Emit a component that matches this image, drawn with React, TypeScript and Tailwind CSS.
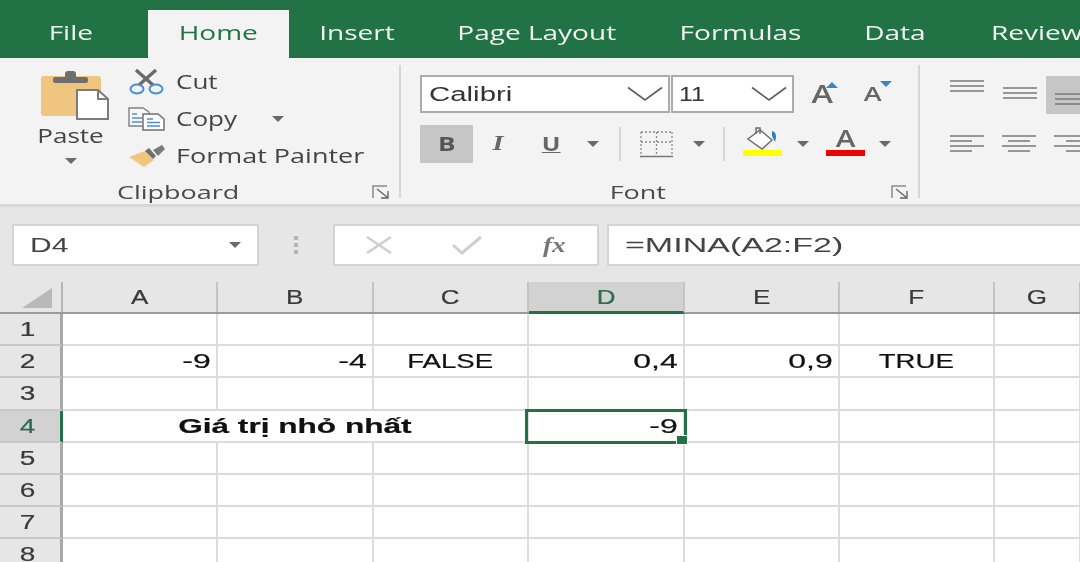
import React from "react";

type O = "l" | "c" | "r";
const originOf: Record<O, string> = { l: "origin-left", c: "origin-center", r: "origin-right" };

// The reference is a horizontally stretched capture, so text glyphs are widened.
function T({ children, o = "c", s = "scale-x-[1.35]", className = "" }: { children: React.ReactNode; o?: O; s?: string; className?: string }) {
  return <span className={`inline-block shrink-0 whitespace-nowrap ${s} ${originOf[o]} ${className}`}>{children}</span>;
}
const UI = "font-['Open_Sans',sans-serif]";
const LIB = "font-['Liberation_Sans',sans-serif]";
const CELL = "font-['Liberation_Sans',sans-serif] [-webkit-text-stroke:0.2px]";

function Caret({ w = 12, color = "#6a6a6a" }: { w?: number; color?: string }) {
  return (
    <svg width={w} height={6} viewBox="0 0 12 6" className="shrink-0">
      <path d="M0 0h12L6 6z" fill={color} />
    </svg>
  );
}
function Chevron() {
  return (
    <svg width={36} height={16} viewBox="0 0 36 16" className="shrink-0">
      <path d="M1 1.5 18 14 35 1.5" fill="none" stroke="#5f5f5f" strokeWidth={1.6} />
    </svg>
  );
}
function PasteIcon() {
  return (
    <svg width={72} height={52} viewBox="0 0 72 52" className="shrink-0 ml-[10px]">
      <rect x={1} y={8} width={60} height={40} rx={3} fill="#efc57f" />
      <rect x={13} y={9} width={35} height={6} rx={2} fill="#6e6e6e" />
      <rect x={25} y={3} width={11} height={8} rx={3} fill="#6e6e6e" />
      <path d="M37 22h21l10 9v20H37z" fill="#fff" stroke="#7c7c7c" strokeWidth={2} />
      <path d="M58 22v9h10" fill="none" stroke="#7c7c7c" strokeWidth={2} />
    </svg>
  );
}
function CutIcon() {
  return (
    <svg width={38} height={26} viewBox="0 0 38 26" className="shrink-0">
      <path d="M8 1 25 16M28 1 11 16" stroke="#6a6a6a" strokeWidth={3.4} fill="none" />
      <ellipse cx={9} cy={20} rx={6.5} ry={4.5} fill="none" stroke="#4a90d0" strokeWidth={2} />
      <ellipse cx={28} cy={20} rx={6.5} ry={4.5} fill="none" stroke="#4a90d0" strokeWidth={2} />
    </svg>
  );
}
function CopyIcon() {
  return (
    <svg width={38} height={24} viewBox="0 0 38 24" className="shrink-0">
      <path d="M1 1h14l6 4v14H1z" fill="#f8f8f8" stroke="#808080" strokeWidth={1.4} />
      <path d="M4 7h5M4 11h10M4 15h10" stroke="#4a90d0" strokeWidth={1.4} />
      <path d="M15 7h15l6 5v11H15z" fill="#fff" stroke="#707070" strokeWidth={1.5} />
      <path d="M19 12h6M19 15.500h13M19 19h13" stroke="#4a90d0" strokeWidth={1.5} />
    </svg>
  );
}
function PainterIcon() {
  return (
    <svg width={38} height={24} viewBox="0 0 38 24" className="shrink-0">
      <path d="M1 13 17 7l9 9-10 7z" fill="#efc57f" />
      <path d="M17 7l4-3 7 8-3 3z" fill="#6e6e6e" />
      <path d="M25 6l9-5 3 4-7 7z" fill="#7a7a7a" />
    </svg>
  );
}
function Launcher() {
  return (
    <svg width={19} height={15} viewBox="0 0 19 15" className="shrink-0">
      <path d="M1 13V1h14" fill="none" stroke="#8a8a8a" strokeWidth={1.5} />
      <path d="M5 4l10 8M16 6v7H9" fill="none" stroke="#666" strokeWidth={1.4} />
    </svg>
  );
}
function BordersIcon() {
  return (
    <svg width={33} height={27} viewBox="0 0 33 27" className="shrink-0">
      <path d="M1 1h31M1 11h31M1 1v22M16.500 1v22M32 1v22" stroke="#8a8a8a" strokeWidth={1.3} strokeDasharray="2 2" fill="none" />
      <path d="M0 25.500h33" stroke="#777" strokeWidth={1.6} />
    </svg>
  );
}
function FillIcon() {
  return (
    <svg width={40} height={30} viewBox="0 0 40 30" className="shrink-0">
      <path d="M5 13 17 4l12 10-10 9z" fill="#fff" stroke="#707070" strokeWidth={1.5} />
      <path d="M13 8V2h4v6" fill="none" stroke="#707070" strokeWidth={1.5} />
      <path d="M29 5c4 1 5 5 3 11l-3-6z" fill="#2f7fc8" />
      <rect x={0} y={24} width={39} height={6} fill="#ffff00" />
    </svg>
  );
}
function TinyTri({ up, className = "" }: { up: boolean; className?: string }) {
  return (
    <svg width={12} height={6} viewBox="0 0 12 6" className={`shrink-0 ${className}`}>
      <path d={up ? "M6 0l6 6H0z" : "M0 0h12L6 6z"} fill="#3d85c6" />
    </svg>
  );
}
function Lines({ kind }: { kind: "full" | "left" | "center" | "right" }) {
  const d: Record<string, string> = {
    full: "M0 1h34M0 6h34M0 11h34",
    left: "M0 1h34M0 6h22M0 11h34M0 16h22",
    center: "M0 1h34M6 6h22M0 11h34M6 16h22",
    right: "M0 1h34M12 6h22M0 11h34M12 16h22",
  };
  return (
    <svg width={34} height={kind === "full" ? 12 : 17} viewBox={`0 0 34 ${kind === "full" ? 12 : 17}`} className="shrink-0">
      <path d={d[kind]} stroke="#7a7a7a" strokeWidth={1.5} fill="none" />
    </svg>
  );
}
function Sep() {
  return <div className="w-[2px] mt-[7px] mb-[6px] bg-[#d6d6d6] shrink-0" />;
}
function GroupFoot({ label, w }: { label: string; w: number }) {
  return (
    <div className="h-[27px] pt-[3px] flex items-center shrink-0">
      <div className="flex justify-center text-[#4a4a4a] text-[19px]" style={{ width: w }}>
        <T s="scale-x-[1.42]">{label}</T>
      </div>
      <div className="ml-[16px] flex">
        <Launcher />
      </div>
    </div>
  );
}

const tabs = [
  { l: "File", w: 148 },
  { l: "Home", w: 141, active: true },
  { l: "Insert", w: 136 },
  { l: "Page Layout", w: 224 },
  { l: "Formulas", w: 184 },
  { l: "Data", w: 123 },
  { l: "Review", w: 162 },
];

const colW = ["w-[155px]", "w-[156px]", "w-[155px]", "w-[156px]", "w-[155px]", "w-[155px]", "w-[86px]"];
const letters = ["A", "B", "C", "D", "E", "F", "G"];
const NUM = "scale-x-[1.6]";

function RowCells({ r }: { r: number }) {
  const row2: Record<number, { t: string; o: O; s: string }> = {
    0: { t: "-9", o: "r", s: NUM },
    1: { t: "-4", o: "r", s: NUM },
    2: { t: "FALSE", o: "c", s: "scale-x-[1.38]" },
    3: { t: "0,4", o: "r", s: NUM },
    4: { t: "0,9", o: "r", s: NUM },
    5: { t: "TRUE", o: "c", s: "scale-x-[1.38]" },
  };
  const base = "shrink-0 h-full border-r-2 border-b-2 border-[#dcdcdc] flex items-center bg-white";
  if (r === 4) {
    return (
      <>
        <div className={`${base} w-[466px] justify-center font-bold`}>
          <T s="scale-x-[1.58]">Giá trị nhỏ nhất</T>
        </div>
        <div className={`${base} ${colW[3]} justify-end pr-[5px] relative`}>
          <T o="r" s={NUM}>-9</T>
          <div className="absolute left-[-4px] top-[-2px] w-[162px] h-[35px] border-[3px] border-[#217346]" />
          <div className="absolute right-[-5px] bottom-[-4px] w-[12px] h-[10px] bg-[#217346] border border-white" />
        </div>
        {[4, 5, 6].map((i) => (
          <div key={i} className={`${base} ${colW[i]}`} />
        ))}
      </>
    );
  }
  return (
    <>
      {colW.map((w, i) => {
        const c = r === 2 ? row2[i] : undefined;
        const just = c?.o === "r" ? "justify-end pr-[5px]" : "justify-center";
        return (
          <div key={i} className={`${base} ${w} ${just}`}>
            {c && <T o={c.o} s={c.s}>{c.t}</T>}
          </div>
        );
      })}
    </>
  );
}

export default function App() {
  return (
    <div className={`w-[1080px] h-[562px] overflow-hidden bg-white blur-[0.7px] ${UI}`}>
      {/* Tabs */}
      <div className="h-[58px] bg-[#217346] flex items-end overflow-hidden">
        {tabs.map((t) => (
          <div
            key={t.l}
            className={`shrink-0 h-[48px] flex items-center justify-center text-[20px] pb-[3px] ${
              t.active ? "bg-[#f3f3f3] text-[#217346]" : "text-[#f2f2f2]"
            }`}
            style={{ width: t.w }}
          >
            <T s="scale-x-[1.4]" className={t.l === "File" ? "mr-[6px]" : ""}>{t.l}</T>
          </div>
        ))}
      </div>

      {/* Ribbon */}
      <div className="h-[149px] bg-[#f3f3f3] border-b-[3px] border-[#d8d8d8] flex text-[#444] overflow-hidden">
        {/* Clipboard */}
        <div className="w-[399px] shrink-0 flex flex-col">
          <div className="flex-1 flex min-h-0">
            <div className="ml-[30px] w-[82px] flex flex-col items-center pt-[10px] shrink-0">
              <PasteIcon />
              <div className="mt-[1px] text-[20px] leading-[30px]">
                <T s="scale-x-[1.3]">Paste</T>
              </div>
              <div className="mt-[7px]">
                <Caret />
              </div>
            </div>
            <div className="ml-[16px] pt-[5px] flex flex-col text-[20px]">
              <div className="h-[37px] flex items-center">
                <div className="w-[48px] flex">
                  <CutIcon />
                </div>
                <T o="l" s="scale-x-[1.3]">Cut</T>
              </div>
              <div className="h-[37px] flex items-center">
                <div className="w-[48px] flex">
                  <CopyIcon />
                </div>
                <T o="l" s="scale-x-[1.3]">Copy</T>
                <div className="ml-[49px]">
                  <Caret />
                </div>
              </div>
              <div className="h-[37px] flex items-center">
                <div className="w-[48px] flex">
                  <PainterIcon />
                </div>
                <T o="l">Format Painter</T>
              </div>
            </div>
          </div>
          <GroupFoot label="Clipboard" w={356} />
        </div>
        <Sep />

        {/* Font */}
        <div className="w-[517px] shrink-0 flex flex-col">
          <div className="flex-1 min-h-0 pl-[19px] pt-[17px]">
            <div className="h-[38px] flex items-center">
              <div className={`w-[250px] h-[38px] bg-white border-2 border-[#ababab] flex items-center justify-between pl-[7px] pr-[5px] text-[#333] text-[20px] ${LIB}`}>
                <T o="l" s="scale-x-[1.47]">Calibri</T>
                <Chevron />
              </div>
              <div className={`ml-[1px] w-[123px] h-[38px] bg-white border-2 border-[#ababab] flex items-center justify-between pl-[6px] pr-[5px] text-[#333] text-[20px] ${LIB}`}>
                <T o="l" s="scale-x-[1.25]">11</T>
                <Chevron />
              </div>
              <div className="ml-[12px] w-[32px] flex items-start justify-center relative text-[#666] font-semibold text-[25px]">
                <T s="scale-x-[1.3]">A</T>
                <TinyTri up className="absolute right-[0px] top-[7px]" />
              </div>
              <div className="ml-[19px] w-[32px] flex items-start justify-center relative text-[#666] font-semibold text-[20px]">
                <T s="scale-x-[1.35]">A</T>
                <TinyTri up={false} className="absolute right-[-3px] top-[2px]" />
              </div>
            </div>
            <div className="h-[38px] mt-[12px] flex items-center">
              <div className="w-[53px] h-[38px] bg-[#c6c6c6] flex items-center justify-center font-bold text-[20px] text-[#555]">
                <T s="scale-x-[1.3]">B</T>
              </div>
              <div className="w-[50px] flex justify-center font-['Liberation_Serif',serif] italic font-bold text-[21px] text-[#666]">
                <T>I</T>
              </div>
              <div className="w-[56px] flex justify-center font-bold underline text-[19px] text-[#666]">
                <T s="scale-x-[1.3]">U</T>
              </div>
              <div className="ml-[4px] w-[20px] flex justify-center">
                <Caret />
              </div>
              <div className="ml-[16px] w-[2px] h-[34px] bg-[#d6d6d6]" />
              <div className="ml-[19px] flex">
                <BordersIcon />
              </div>
              <div className="ml-[20px] flex">
                <Caret />
              </div>
              <div className="ml-[18px] w-[2px] h-[34px] bg-[#d6d6d6]" />
              <div className="ml-[18px] flex mb-[7px]">
                <FillIcon />
              </div>
              <div className="ml-[14px] flex">
                <Caret />
              </div>
              <div className="ml-[17px] w-[39px] flex flex-col items-center mb-[6px]">
                <div className="text-[#666] font-semibold text-[23px] leading-[24px]">
                  <T s="scale-x-[1.3]">A</T>
                </div>
                <div className="w-[39px] h-[6px] bg-[#f00000]" />
              </div>
              <div className="ml-[14px] flex">
                <Caret />
              </div>
            </div>
          </div>
          <GroupFoot label="Font" w={474} />
        </div>
        <Sep />

        {/* Alignment */}
        <div className="pl-[21px] flex-1 min-w-0 overflow-hidden">
          <div className="flex w-[200px] mt-[18px] h-[38px]">
            <div className="w-[52px] shrink-0 flex justify-center pt-[4px]">
              <Lines kind="full" />
            </div>
            <div className="w-[53px] shrink-0 flex justify-center pt-[11px]">
              <Lines kind="full" />
            </div>
            <div className="w-[52px] shrink-0 flex justify-center pt-[17px] bg-[#c6c6c6]">
              <Lines kind="full" />
            </div>
          </div>
          <div className="flex w-[200px] mt-[21px]">
            <div className="w-[52px] shrink-0 flex justify-center">
              <Lines kind="left" />
            </div>
            <div className="w-[52px] shrink-0 flex justify-center">
              <Lines kind="center" />
            </div>
            <div className="w-[52px] shrink-0 flex justify-center">
              <Lines kind="right" />
            </div>
          </div>
        </div>
      </div>

      {/* Formula bar */}
      <div className="h-[75px] bg-[#e6e6e6] pt-[17px] flex items-start overflow-hidden">
        <div className={`ml-[12px] w-[247px] h-[42px] shrink-0 bg-white border-2 border-[#d4d4d4] flex items-center justify-between pl-[16px] pr-[14px] text-[#444] text-[20px] ${LIB}`}>
          <T o="l" s="scale-x-[1.5]">D4</T>
          <Caret w={16} />
        </div>
        <div className="w-[74px] h-[42px] shrink-0 flex flex-col items-center justify-center gap-[3px]">
          <div className="w-[4px] h-[4px] bg-[#b4b4b4]" />
          <div className="w-[4px] h-[4px] bg-[#b4b4b4]" />
          <div className="w-[4px] h-[4px] bg-[#b4b4b4]" />
        </div>
        <div className="w-[266px] h-[42px] shrink-0 bg-white border-2 border-[#d4d4d4] flex items-center">
          <div className="w-[87px] flex justify-center">
            <svg width={28} height={18} viewBox="0 0 28 18">
              <path d="M2 1l24 16M26 1 2 17" stroke="#cfcfcf" strokeWidth={2.6} fill="none" />
            </svg>
          </div>
          <div className="w-[90px] flex justify-center">
            <svg width={32} height={20} viewBox="0 0 32 20">
              <path d="M2 10l9 8L30 2" stroke="#cfcfcf" strokeWidth={3} fill="none" />
            </svg>
          </div>
          <div className="w-[85px] flex justify-center font-['Liberation_Serif',serif] italic font-bold text-[20px] text-[#777]">
            <T>fx</T>
          </div>
        </div>
        <div className={`ml-[8px] w-[500px] h-[42px] shrink-0 bg-white border-2 border-[#d4d4d4] flex items-center pl-[16px] text-[#444] text-[21px] ${LIB}`}>
          <T o="l" s="scale-x-[1.62]">=MINA(A2:F2)</T>
        </div>
      </div>

      {/* Sheet */}
      <div className={`${CELL} text-[20px] text-[#3a3a3a]`}>
        <div className="h-[32px] flex bg-[#e6e6e6] border-b-2 border-[#9c9c9c]">
          <div className="w-[63px] shrink-0 flex items-end justify-end pr-[9px] pb-[4px] border-r-2 border-[#b5b5b5]">
            <svg width={30} height={20} viewBox="0 0 30 20">
              <path d="M30 0v20H0z" fill="#b9b9b9" />
            </svg>
          </div>
          {letters.map((l, i) => (
            <div
              key={l}
              className={`${colW[i]} shrink-0 flex items-center justify-center border-r-2 border-[#c4c4c4] ${
                l === "D" ? "bg-[#d2d2d2] text-[#2f6b52] h-[32px] border-b-[3px] border-b-[#217346]" : ""
              }`}
            >
              <T s="scale-x-[1.3]">{l}</T>
            </div>
          ))}
        </div>
        {[1, 2, 3, 4, 5, 6, 7, 8].map((r) => (
          <div key={r} className="h-[32.2px] flex text-[#111]">
            <div
              className={`w-[63px] shrink-0 flex items-center justify-center border-b-2 border-[#c8c8c8] ${
                r === 4
                  ? "bg-[#d2d2d2] text-[#2f6b52] border-r-[3px] border-r-[#217346]"
                  : "bg-[#e6e6e6] text-[#3a3a3a] border-r-[3px] border-r-[#a8a8a8]"
              }`}
            >
              <T s="scale-x-[1.4]" className="mr-[4px]">{r}</T>
            </div>
            <RowCells r={r} />
          </div>
        ))}
      </div>
    </div>
  );
}
